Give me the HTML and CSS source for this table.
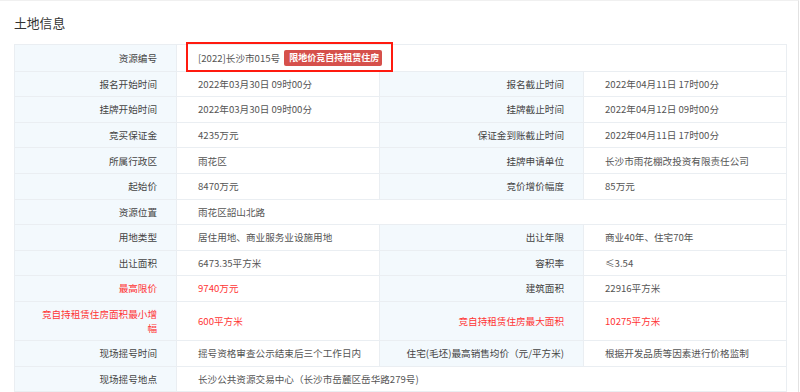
FILE: index.html
```html
<!DOCTYPE html>
<html lang="zh">
<head>
<meta charset="utf-8">
<link rel="stylesheet" href="styles.css">
</head>
<body>
<div class="page">
  <h3 class="title">土地信息</h3>
  <table class="info">
    <colgroup>
      <col class="c-label1"><col class="c-val"><col class="c-label2"><col class="c-val">
    </colgroup>
    <tr class="first">
      <th>资源编号</th>
      <td colspan="3"><span class="code">[2022]长沙市015号</span><span class="badge">限地价竞自持租赁住房</span></td>
    </tr>
    <tr><th>报名开始时间</th><td>2022年03月30日 09时00分</td><th>报名截止时间</th><td>2022年04月11日 17时00分</td></tr>
    <tr><th>挂牌开始时间</th><td>2022年03月30日 09时00分</td><th>挂牌截止时间</th><td>2022年04月12日 09时00分</td></tr>
    <tr><th>竞买保证金</th><td>4235万元</td><th>保证金到账截止时间</th><td>2022年04月11日 17时00分</td></tr>
    <tr><th>所属行政区</th><td>雨花区</td><th>挂牌申请单位</th><td>长沙市雨花棚改投资有限责任公司</td></tr>
    <tr><th>起始价</th><td>8470万元</td><th>竞价增价幅度</th><td>85万元</td></tr>
    <tr><th>资源位置</th><td colspan="3">雨花区韶山北路</td></tr>
    <tr><th>用地类型</th><td>居住用地、商业服务业设施用地</td><th>出让年限</th><td>商业40年、住宅70年</td></tr>
    <tr><th>出让面积</th><td>6473.35平方米</td><th>容积率</th><td>≤3.54</td></tr>
    <tr><th class="red">最高限价</th><td class="red">9740万元</td><th>建筑面积</th><td>22916平方米</td></tr>
    <tr class="tall"><th class="red">竞自持租赁住房面积最小增幅</th><td class="red">600平方米</td><th class="red">竞自持租赁住房最大面积</th><td class="red">10275平方米</td></tr>
    <tr><th>现场摇号时间</th><td>摇号资格审查公示结束后三个工作日内</td><th>住宅(毛坯)最高销售均价（元/平方米)</th><td>根据开发品质等因素进行价格监制</td></tr>
    <tr><th>现场摇号地点</th><td colspan="3">长沙公共资源交易中心（长沙市岳麓区岳华路279号)</td></tr>
    <tr><th>&nbsp;</th><td colspan="3">&nbsp;</td></tr>
  </table>
  <div class="mark"></div>
</div>
</body>
</html>
```

FILE: styles.css
```css
html, body {
  margin: 0;
  padding: 0;
  background: #fff;
}
body {
  font-family: "Noto Sans CJK SC", "Noto Sans", sans-serif;
  overflow: hidden;
}
.page {
  position: relative;
  width: 799px;
  height: 392px;
  box-sizing: border-box;
  border-top: 1px solid #f0f0f0;
  border-right: 1px solid #e2e2e2;
  padding: 0 0 0 14px;
  overflow: hidden;
}
.title {
  margin: 0;
  padding-top: 13px;
  font-size: 12.8px;
  line-height: 17px;
  font-weight: normal;
  color: #333;
  height: 30px;
  box-sizing: border-box;
  margin-bottom: 13px;
}
.info {
  width: 771px;
  border-collapse: collapse;
  table-layout: fixed;
  border: 1px solid #eaeef2;
  font-size: 9.6px;
}
.c-label1 { width: 162px; }
.c-label2 { width: 204px; }
.c-val { width: 203px; }
.info tr { height: 25.6px; }
.info tr.first { height: 26.6px; }
.info tr.tall { height: 39px; }
.info th, .info td {
  border: 1px solid #eaeef2;
  padding: 0;
  line-height: 14.3px;
  vertical-align: middle;
}
.info th {
  background: #f3f9fd;
  font-weight: normal;
  text-align: right;
  color: #444;
  padding: 0 19px 0 20px;
}
.info td {
  background: #fff;
  text-align: left;
  color: #555;
  padding: 0 6px 0 21px;
  white-space: nowrap;
}
.info .red { color: #ff3535; }
.code { vertical-align: middle; }
.badge {
  display: inline-block;
  vertical-align: middle;
  margin-left: 4px;
  height: 16px;
  line-height: 16px;
  padding: 0 3px 0 5px;
  background: #d6504b;
  color: #fff;
  font-size: 9px;
  font-weight: bold;
  border-radius: 2px;
}
.mark {
  position: absolute;
  left: 186px;
  top: 41px;
  width: 207px;
  height: 30px;
  box-sizing: border-box;
  border: 2px solid #ff1a0f;
}
```
